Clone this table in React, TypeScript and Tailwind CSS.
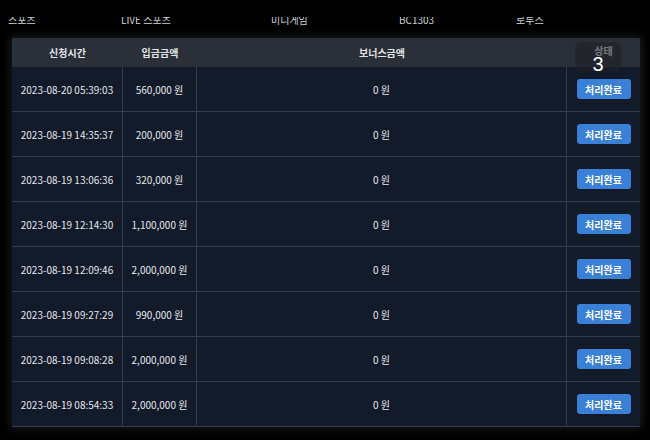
const nav = ["스포츠", "LIVE 스포츠", "미니게임", "BC1303", "로투스"];
const navX = ["w-[113px]", "w-[150px]", "w-[128px]", "w-[117px]", "w-[100px]"];

const rows = [
  { time: "2023-08-20 05:39:03", amount: "560,000 원" },
  { time: "2023-08-19 14:35:37", amount: "200,000 원" },
  { time: "2023-08-19 13:06:36", amount: "320,000 원" },
  { time: "2023-08-19 12:14:30", amount: "1,100,000 원" },
  { time: "2023-08-19 12:09:46", amount: "2,000,000 원" },
  { time: "2023-08-19 09:27:29", amount: "990,000 원" },
  { time: "2023-08-19 09:08:28", amount: "2,000,000 원" },
  { time: "2023-08-19 08:54:33", amount: "2,000,000 원" },
];

const cols = "grid grid-cols-[111px_74px_370px_1fr]";

export default function App() {
  return (
    <div
      className="w-[650px] h-[440px] bg-black overflow-hidden text-[#e6e8ec]"
      style={{ fontFamily: '"Noto Sans CJK KR", "Noto Sans", sans-serif' }}
    >
      {/* top nav, its upper half lost in the capture */}
      <div className="h-[17px]" />
      <div className="h-[11px] overflow-hidden">
        <div className="flex -mt-[4px] pl-[8px] text-[10px] leading-[14px] text-[#cfd2d6]">
          {nav.map((n, i) => (
            <span key={n} className={navX[i]}>
              {n}
            </span>
          ))}
        </div>
      </div>

      <div className="h-[10px]" />

      {/* table */}
      <div className="relative ml-[12px] w-[628px] shadow-[0_0_8px_2px_rgba(40,44,52,0.6)]">
        <div className={`${cols} h-[29px] bg-[#2b2f37] text-[10px] font-bold text-[#e2e4e8]`}>
          <div className="flex items-center justify-center">신청시간</div>
          <div className="flex items-center justify-center">입금금액</div>
          <div className="flex items-center justify-center">보너스금액</div>
          <div className="flex items-center justify-center pb-[4px]">상태</div>
        </div>

        {rows.map((r) => (
          <div
            key={r.time}
            className={`${cols} h-[45px] bg-[#131a29] border-b border-[#343b49] text-[10px]`}
          >
            <div className="flex items-center justify-center border-r border-[#343b49]">{r.time}</div>
            <div className="flex items-center justify-center border-r border-[#343b49]">{r.amount}</div>
            <div className="flex items-center justify-center border-r border-[#343b49]">0 원</div>
            <div className="flex items-center justify-center">
              <span className="flex items-center justify-center w-[54px] h-[20px] rounded-[3px] bg-[#3a80d6] text-white text-[10px] font-bold">
                처리완료
              </span>
            </div>
          </div>
        ))}

        {/* page badge overlay */}
        <div className="absolute left-[563px] top-[4px] w-[46px] h-[31px] rounded-[6px] bg-[rgba(30,33,39,0.55)] flex items-start justify-center pt-[12px]">
          <span className="text-[20px] leading-[20px] text-white" style={{ fontFamily: '"Liberation Sans", sans-serif' }}>
            3
          </span>
        </div>
      </div>
    </div>
  );
}
